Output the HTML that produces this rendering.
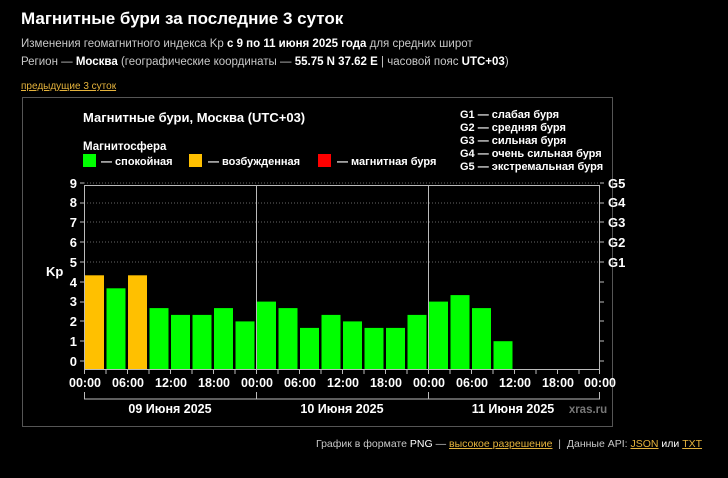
<!DOCTYPE html>
<html><head><meta charset="utf-8"><style>
body{margin:0;background:#000;width:728px;height:478px;overflow:hidden;font-family:"Liberation Sans",sans-serif;color:#fff;position:relative}
.a{position:absolute;white-space:nowrap}
.g{color:#c8c8c8}
a{color:#e5b33c;text-decoration:underline}
</style></head><body>
<div class="a" style="left:21px;top:9px;font-size:17px;font-weight:bold">Магнитные бури за последние 3 суток</div>
<div class="a g" style="left:21px;top:38px;font-size:11.5px">Изменения геомагнитного индекса Kp <b style="color:#fff">с 9 по 11 июня 2025 года</b> для средних широт</div>
<div class="a g" style="left:21px;top:56px;font-size:11.5px">Регион — <b style="color:#fff">Москва</b> (географические координаты — <b style="color:#fff">55.75 N 37.62 E</b> | часовой пояс <b style="color:#fff">UTC+03</b>)</div>
<div class="a" style="left:21px;top:81px;font-size:10px"><a>предыдущие 3 суток</a></div>
<svg class="a" style="left:0;top:0" width="728" height="478" font-family="Liberation Sans, sans-serif" font-weight="bold">
<rect x="22.5" y="97.5" width="590" height="329" fill="none" stroke="#555"/>
<text x="83" y="122" font-size="13" fill="#fff">Магнитные бури, Москва (UTC+03)</text>
<text x="83" y="150" font-size="11.5" fill="#fff">Магнитосфера</text>
<rect x="83" y="154" width="13" height="13" fill="#00ff00"/>
<text x="101" y="165" font-size="11" fill="#fff">— спокойная</text>
<rect x="189" y="154" width="13" height="13" fill="#ffc000"/>
<text x="208" y="165" font-size="11" fill="#fff">— возбужденная</text>
<rect x="318" y="154" width="13" height="13" fill="#ff0000"/>
<text x="337" y="165" font-size="11" fill="#fff">— магнитная буря</text>
<g font-size="11" fill="#fff">
<text x="460" y="118">G1 — слабая буря</text>
<text x="460" y="131">G2 — средняя буря</text>
<text x="460" y="144">G3 — сильная буря</text>
<text x="460" y="157">G4 — очень сильная буря</text>
<text x="460" y="170">G5 — экстремальная буря</text>
</g>
<g stroke="#666" stroke-dasharray="1,2">
<line x1="84" x2="600" y1="183" y2="183"/><line x1="84" x2="600" y1="203" y2="203"/><line x1="84" x2="600" y1="222" y2="222"/><line x1="84" x2="600" y1="242" y2="242"/><line x1="84" x2="600" y1="262" y2="262"/>
</g>
<g fill="#00ff00">
<rect x="85" y="275.3" width="19" height="93.7" fill="#ffc000"/>
<rect x="106.5" y="288.3" width="19" height="80.7"/>
<rect x="128" y="275.3" width="19" height="93.7" fill="#ffc000"/>
<rect x="149.5" y="308.1" width="19" height="60.9"/>
<rect x="171" y="314.9" width="19" height="54.1"/>
<rect x="192.5" y="314.9" width="19" height="54.1"/>
<rect x="214" y="308.1" width="19" height="60.9"/>
<rect x="235.5" y="321.4" width="19" height="47.6"/>
<rect x="257" y="301.6" width="19" height="67.4"/>
<rect x="278.5" y="308.1" width="19" height="60.9"/>
<rect x="300" y="327.9" width="19" height="41.1"/>
<rect x="321.5" y="314.9" width="19" height="54.1"/>
<rect x="343" y="321.4" width="19" height="47.6"/>
<rect x="364.5" y="327.9" width="19" height="41.1"/>
<rect x="386" y="327.9" width="19" height="41.1"/>
<rect x="407.5" y="314.9" width="19" height="54.1"/>
<rect x="429" y="301.6" width="19" height="67.4"/>
<rect x="450.5" y="295.1" width="19" height="73.9"/>
<rect x="472" y="308.1" width="19" height="60.9"/>
<rect x="493.5" y="341.2" width="19" height="27.8"/>
</g>
<g stroke="#bbb" fill="none">
<rect x="84.5" y="185.5" width="515" height="184"/>
<line x1="256.5" y1="185" x2="256.5" y2="370"/><line x1="428.5" y1="185" x2="428.5" y2="370"/>
<path d="M84.5 392v7h515v-7M256.5 392v7M428.5 392v7"/>
<path d="M84.5 370v4M106 370v4M127.5 370v4M149 370v4M170.5 370v4M192 370v4M213.5 370v4M235 370v4M256.5 370v4M278 370v4M299.5 370v4M321 370v4M342.5 370v4M364 370v4M385.5 370v4M407 370v4M428.5 370v4M450 370v4M471.5 370v4M493 370v4M514.5 370v4M536 370v4M557.5 370v4M579 370v4M599.5 370v4"/>
<path d="M80 361h4M80 341h4M80 321h4M80 302h4M80 282h4M80 262h4M80 242h4M80 222h4M80 203h4M80 183h4M600 183h4M600 203h4M600 222h4M600 242h4M600 262h4M600 282h4M600 302h4M600 321h4M600 341h4M600 361h4"/>
</g>
<g font-size="13" fill="#fff" text-anchor="end">
<text x="77" y="366">0</text><text x="77" y="346">1</text><text x="77" y="326">2</text><text x="77" y="306">3</text><text x="77" y="287">4</text><text x="77" y="267">5</text><text x="77" y="247">6</text><text x="77" y="227">7</text><text x="77" y="207">8</text><text x="77" y="188">9</text>
</g>
<text x="46" y="276" font-size="13" fill="#fff">Kp</text>
<g font-size="13" fill="#fff">
<text x="608" y="188">G5</text><text x="608" y="207">G4</text><text x="608" y="227">G3</text><text x="608" y="247">G2</text><text x="608" y="267">G1</text>
</g>
<g font-size="12.5" fill="#fff" text-anchor="middle">
<text x="85" y="387">00:00</text><text x="128" y="387">06:00</text><text x="171" y="387">12:00</text><text x="214" y="387">18:00</text><text x="257" y="387">00:00</text><text x="300" y="387">06:00</text><text x="343" y="387">12:00</text><text x="386" y="387">18:00</text><text x="429" y="387">00:00</text><text x="472" y="387">06:00</text><text x="515" y="387">12:00</text><text x="558" y="387">18:00</text><text x="600" y="387">00:00</text>
<text x="170" y="413">09 Июня 2025</text><text x="342" y="413">10 Июня 2025</text><text x="513" y="413">11 Июня 2025</text>
</g>
<text x="588" y="413" font-size="11.5" fill="#777" text-anchor="middle">xras.ru</text>
</svg>
<div class="a g" style="left:316px;top:438px;font-size:10.5px">График в формате <span style="color:#fff">PNG</span> — <a>высокое разрешение</a> &nbsp;|&nbsp; Данные API: <a>JSON</a> <span style="color:#fff">или</span> <a>TXT</a></div>
</body></html>
